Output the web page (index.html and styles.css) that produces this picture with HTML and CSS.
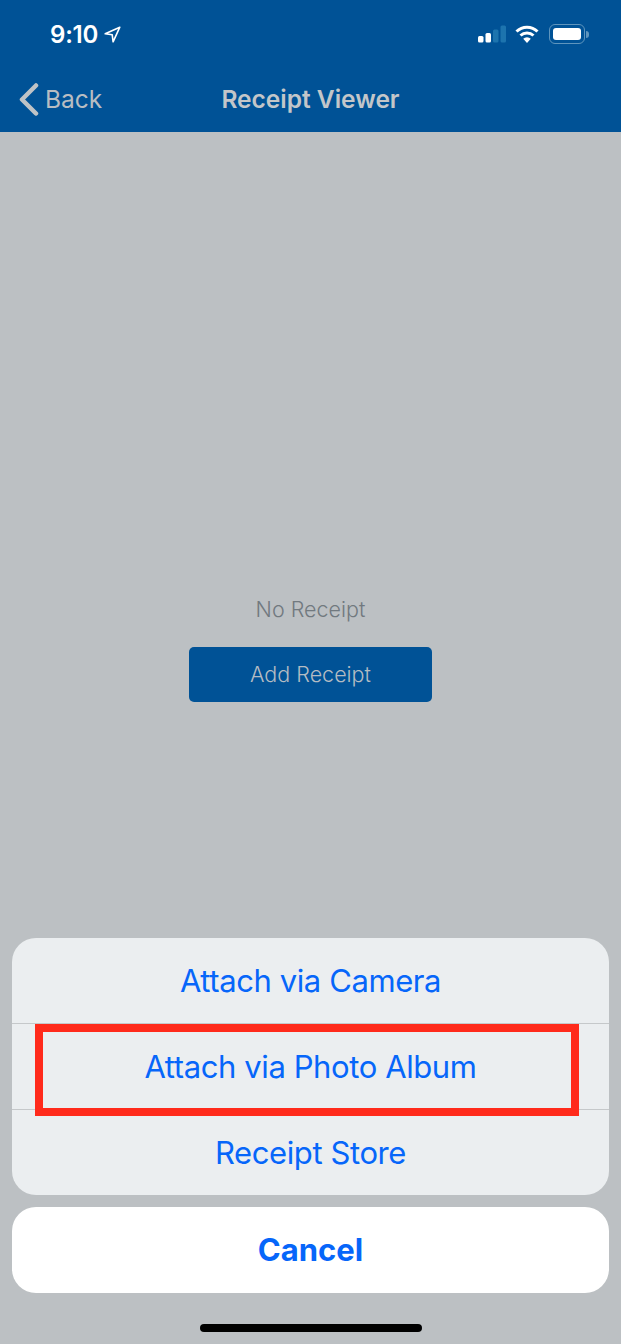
FILE: index.html
```html
<!DOCTYPE html>
<html lang="en">
<head>
  <meta charset="UTF-8" />
  <meta name="viewport" content="width=device-width, initial-scale=1.0"/>
  <title>Receipt Viewer</title>
  <link rel="stylesheet" href="styles.css">
</head>
<body>
  <div class="page">
    <header class="topbar">
      <div class="status">
        <div class="status-left">
          <span class="time">9:10</span>
          <svg class="arrow" width="17" height="17" viewBox="0 0 17 17">
            <path d="M15.800 1.200 1.200 7.800l7 .9.9 7.100z" fill="none" stroke="#fff" stroke-width="1.600" stroke-linejoin="round"/>
          </svg>
        </div>
        <div class="status-right">
          <svg width="29" height="18" viewBox="0 0 29 18">
            <rect x="0" y="11" width="5.500" height="6.500" rx="1.500" fill="#fff"/>
            <rect x="7.500" y="8" width="5.500" height="9.500" rx="1.500" fill="#fff"/>
            <rect x="15" y="4.500" width="5.500" height="13" rx="1.500" fill="#1d74ae"/>
            <rect x="22.500" y="0.500" width="5.500" height="17" rx="1.500" fill="#1d74ae"/>
          </svg>
          <svg class="wifi" width="24" height="19" viewBox="0 0 24 19">
            <path d="M1.500 6.500a15 15 0 0 1 21 0" fill="none" stroke="#fff" stroke-width="3"/>
            <path d="M5.500 10.500a9.500 9.500 0 0 1 13 0" fill="none" stroke="#fff" stroke-width="3"/>
            <path d="M8.200 13.800 12 18l3.800-4.200a5.400 5.400 0 0 0-7.600 0z" fill="#fff"/>
          </svg>
          <div class="battery">
            <div class="battery-fill"></div>
          </div>
          <div class="battery-nub"></div>
        </div>
      </div>
      <nav class="navbar">
        <div class="back">
          <svg width="20" height="33" viewBox="0 0 20 33">
            <path d="M17 2.500 3 16.500l14 14" fill="none" stroke="#bfc3c6" stroke-width="4.500" stroke-linecap="round" stroke-linejoin="round"/>
          </svg>
          <span>Back</span>
        </div>
        <div class="nav-title">Receipt Viewer</div>
      </nav>
    </header>

    <main class="content">
      <p class="empty-label">No Receipt</p>
      <button class="add-btn">Add Receipt</button>
    </main>

    <section class="sheet">
      <div class="sheet-row">Attach via Camera</div>
      <div class="sheet-row">Attach via Photo Album</div>
      <div class="sheet-row sheet-row-last">Receipt Store</div>
      <div class="highlight"></div>
    </section>
    <div class="cancel">Cancel</div>

    <div class="home-area">
      <div class="home-bar"></div>
    </div>
  </div>
</body>
</html>
```

FILE: styles.css
```css
* {
  box-sizing: border-box;
}

body {
  margin: 0;
  font-family: Inter, "Liberation Sans", sans-serif;
  background-color: #bcc0c3;
}

.page {
  display: flex;
  flex-direction: column;
  height: 1344px;
  overflow: hidden;
}

.topbar {
  height: 132px;
  background-color: #005296;
}

.status {
  display: flex;
  justify-content: space-between;
  height: 66px;
  padding: 16px 32px 0 50px;
}

.status-left {
  display: flex;
  align-items: center;
  height: 36px;
}

.time {
  color: #fff;
  font-size: 24px;
  font-weight: 600;
  letter-spacing: -0.2px;
}

.arrow {
  margin-left: 6px;
}

.status-right {
  display: flex;
  align-items: center;
  height: 36px;
}

.wifi {
  margin-left: 8px;
}

.battery {
  width: 36px;
  height: 20px;
  margin-left: 10px;
  padding: 3px;
  border: 1.500px solid #5f95bd;
  border-radius: 6px;
}

.battery-fill {
  height: 100%;
  background: #fff;
  border-radius: 3px;
}

.battery-nub {
  width: 3px;
  height: 7px;
  margin-left: 1px;
  background: #5f95bd;
  border-radius: 0 3px 3px 0;
}

.navbar {
  position: relative;
  display: flex;
  align-items: center;
  justify-content: center;
  height: 66px;
}

.back {
  position: absolute;
  left: 19px;
  top: 0;
  display: flex;
  align-items: center;
  gap: 6px;
  height: 66px;
  color: #b8bdc2;
  font-size: 24.500px;
}

.nav-title {
  color: #c3c6c9;
  font-size: 24.500px;
  font-weight: 600;
}

.content {
  display: flex;
  flex-direction: column;
  align-items: center;
  flex: 1;
  padding-top: 462px;
}

.empty-label {
  margin: 0 0 23px;
  height: 30px;
  line-height: 30px;
  color: #71797f;
  font-size: 21.500px;
  font-weight: 300;
}

.add-btn {
  width: 243px;
  height: 55px;
  padding: 0 0 2px;
  background-color: #005296;
  color: #b4bcc3;
  border: none;
  border-radius: 5px;
  font-family: inherit;
  font-size: 21.500px;
  font-weight: 300;
}

.sheet {
  position: relative;
  margin: 0 12px;
  background-color: #ebeef0;
  border-radius: 24px;
}

.sheet-row {
  display: flex;
  align-items: center;
  justify-content: center;
  height: 86px;
  color: #0666fa;
  font-size: 31px;
  letter-spacing: -0.4px;
  border-bottom: 1px solid #c5c8ca;
}

.sheet-row-last {
  height: 85px;
  border-bottom: none;
}

/* red annotation box drawn over the screenshot */
.highlight {
  position: absolute;
  left: 23px;
  top: 86px;
  width: 544px;
  height: 92px;
  border: 8px solid #ff2a1b;
}

.cancel {
  display: flex;
  align-items: center;
  justify-content: center;
  height: 86px;
  margin: 12px 12px 0;
  padding-bottom: 2px;
  background: #fff;
  border-radius: 24px;
  color: #0666fa;
  font-size: 31px;
  font-weight: 700;
}

.home-area {
  display: flex;
  justify-content: center;
  height: 51px;
  padding-top: 31px;
}

.home-bar {
  width: 222px;
  height: 8px;
  background: #000;
  border-radius: 4px;
}
```
